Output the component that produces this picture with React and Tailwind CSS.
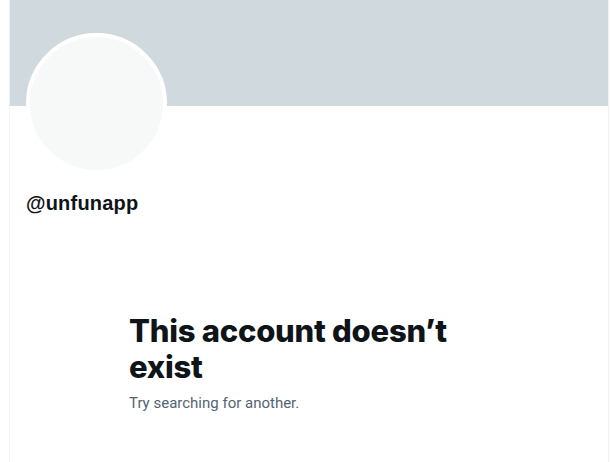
export default function App() {
  return (
    <div className="w-full h-[462px] bg-white overflow-hidden">
      <div className="ml-[9px] w-[600px] h-full border-x border-[#eff3f4]">
        <div className="h-[106px] bg-[#cfd9de]" />
        <div className="px-4">
          <div className="-mt-[73px] w-[141px] h-[141px] rounded-full border-4 border-white bg-[#f7f9f9]" />
          <div
            className="mt-[17px] text-[20px] leading-[24px] font-bold text-[#0f1419] tracking-[0.2px]"
            style={{ fontFamily: '"Liberation Sans", Arial, sans-serif' }}
          >
            @unfunapp
          </div>
        </div>
        <div className="mt-[98px] ml-[119px] w-[340px]">
          <div
            className="text-[31px] leading-[36px] font-extrabold text-[#0f1419] tracking-[-0.25px]"
            style={{ fontFamily: 'Inter, "Noto Sans", sans-serif' }}
          >
            This account doesn’t exist
          </div>
          <div
            className="mt-2 text-[15px] leading-[20px] text-[#536471]"
            style={{ fontFamily: 'Roboto, "Noto Sans", sans-serif' }}
          >
            Try searching for another.
          </div>
        </div>
      </div>
    </div>
  );
}
